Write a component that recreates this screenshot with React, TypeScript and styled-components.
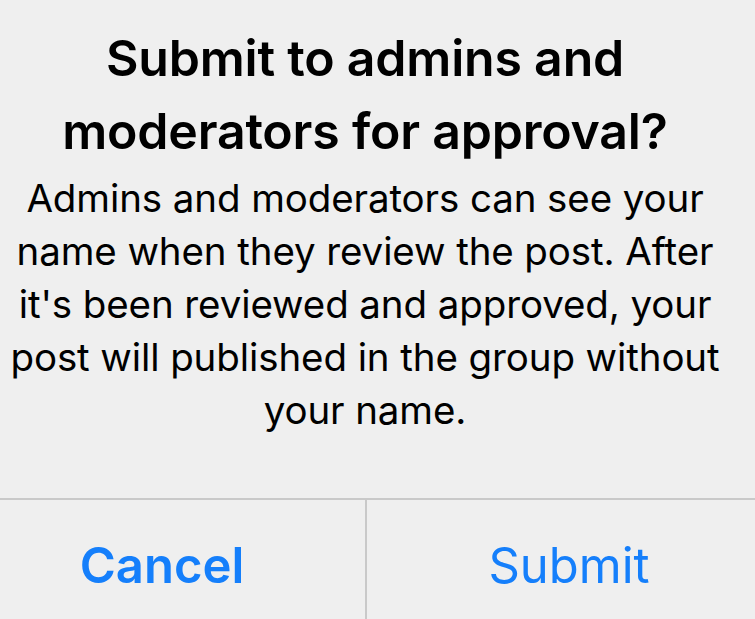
import styled, { createGlobalStyle } from 'styled-components';

const GlobalStyle = createGlobalStyle`
  html, body {
    margin: 0;
    padding: 0;
    background: #efefef;
  }

  body {
    width: 755px;
    height: 619px;
    overflow: hidden;
    -webkit-font-smoothing: antialiased;
  }
`;

const Alert = styled.div`
  width: 812px;
  margin-left: -41px;
  display: flex;
  flex-direction: column;
  background: #efefef;
  font-family: Inter, "Liberation Sans", sans-serif;
`;

const Content = styled.div`
  display: flex;
  flex-direction: column;
  align-items: center;
  padding: 22px 40px 0;
  height: 498px;
  box-sizing: border-box;
  text-align: center;
`;

const Title = styled.h2`
  margin: 0;
  font-size: 50px;
  font-weight: 600;
  line-height: 73px;
  letter-spacing: -0.2px;
  color: #000;
`;

const Message = styled.p`
  margin: 4px 0 0;
  font-size: 38.5px;
  font-weight: 400;
  line-height: 53px;
  letter-spacing: -0.1px;
  color: #000;
`;

const Actions = styled.div`
  display: grid;
  grid-template-columns: 1fr 1fr;
  border-top: 2px solid #c9c9c9;
`;

const ActionButton = styled.button<{ $primary?: boolean }>`
  appearance: none;
  border: 0;
  background: transparent;
  height: 140px;
  padding: 0 0 10px;
  font-family: Inter, "Liberation Sans", sans-serif;
  font-size: 49px;
  font-weight: ${({ $primary }) => ($primary ? 600 : 400)};
  color: #157ffb;
  cursor: pointer;

  & + & {
    border-left: 2px solid #c9c9c9;
  }
`;

const App = () => (
  <>
    <GlobalStyle />
    <Alert role="alertdialog">
      <Content>
        <Title>
          Submit to admins and
          <br />
          moderators for approval?
        </Title>
        <Message>
          Admins and moderators can see your
          <br />
          name when they review the post. After
          <br />
          it's been reviewed and approved, your
          <br />
          post will published in the group without
          <br />
          your name.
        </Message>
      </Content>
      <Actions>
        <ActionButton $primary>Cancel</ActionButton>
        <ActionButton>Submit</ActionButton>
      </Actions>
    </Alert>
  </>
);

export default App;
